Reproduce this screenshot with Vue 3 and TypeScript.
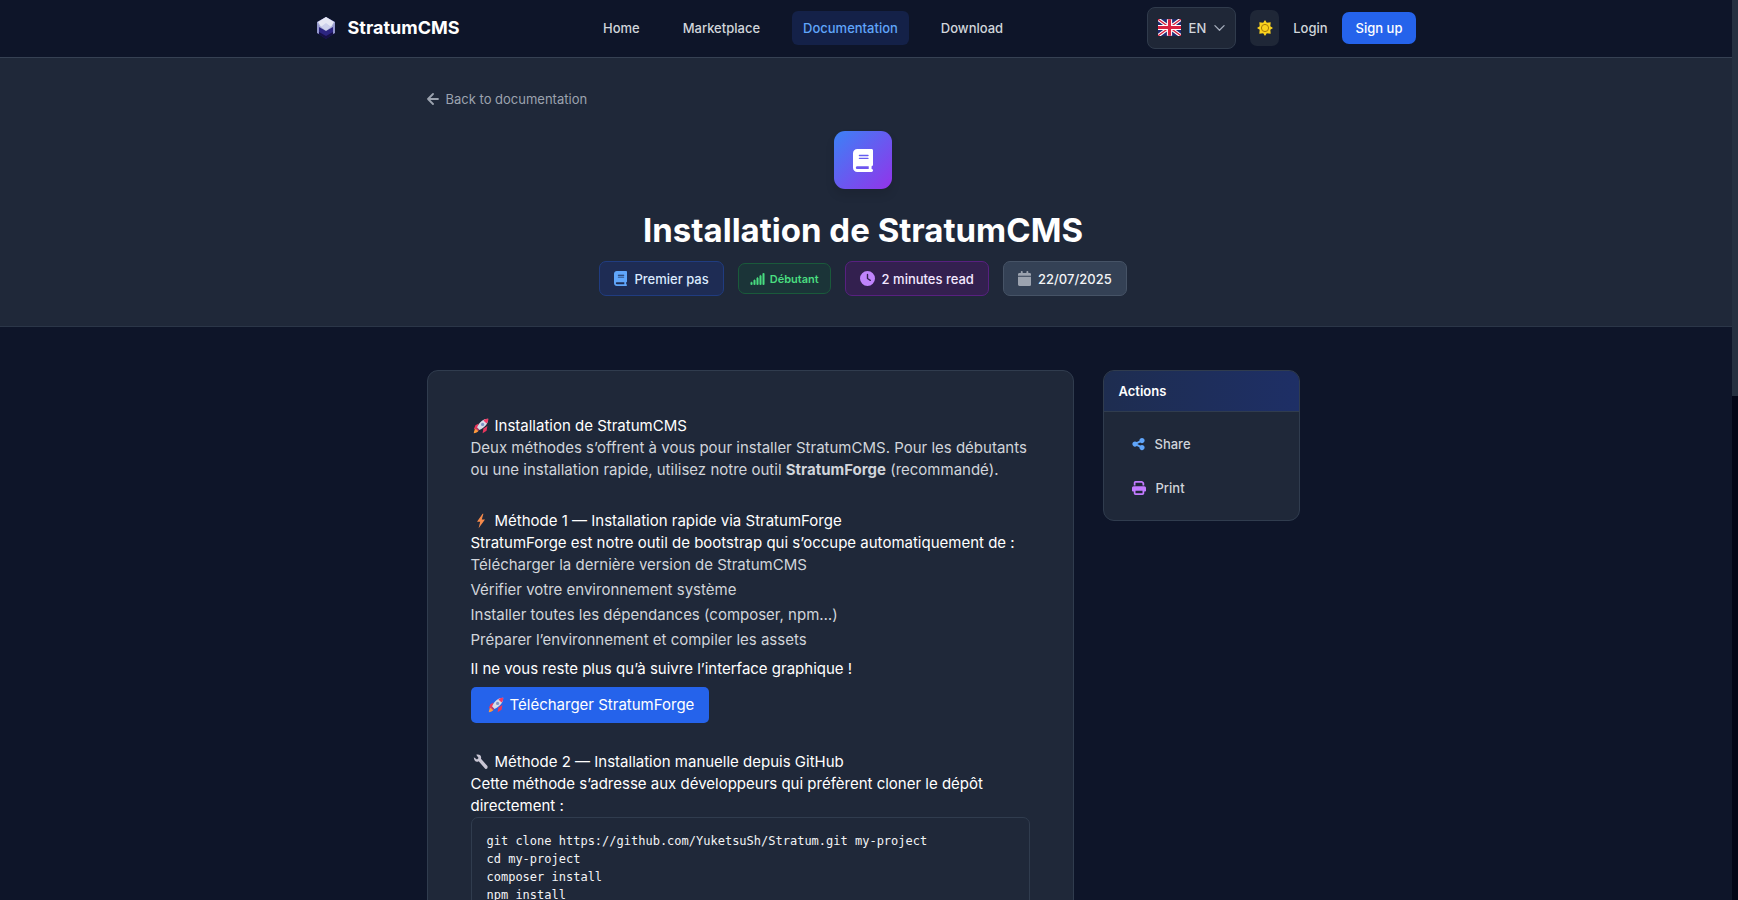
<script setup lang="ts">
interface NavItem { label: string; active?: boolean }
interface Badge { label: string; kind: string; box: string; path: string }

const nav: NavItem[] = [
  { label: 'Home' },
  { label: 'Marketplace' },
  { label: 'Documentation', active: true },
  { label: 'Download' },
]

const book = 'M96 0C43 0 0 43 0 96V416c0 53 43 96 96 96H384h32c17.7 0 32-14.3 32-32s-14.3-32-32-32V384c17.7 0 32-14.3 32-32V32c0-17.7-14.3-32-32-32H384 96zm0 384H352v64H96c-17.7 0-32-14.3-32-32s14.3-32 32-32zm32-240c0-8.8 7.2-16 16-16H336c8.8 0 16 7.2 16 16s-7.2 16-16 16H144c-8.8 0-16-7.2-16-16zm16 48H336c8.8 0 16 7.2 16 16s-7.2 16-16 16H144c-8.8 0-16-7.2-16-16s7.2-16 16-16z'

const badges: Badge[] = [
  { label: 'Premier pas', kind: 'blue', box: '0 0 448 512', path: book },
  { label: 'Débutant', kind: 'green', box: '0 0 640 512', path: 'M576 0c17.7 0 32 14.3 32 32V480c0 17.7-14.3 32-32 32s-32-14.3-32-32V32c0-17.7 14.3-32 32-32zM448 96c17.7 0 32 14.3 32 32V480c0 17.7-14.3 32-32 32s-32-14.3-32-32V128c0-17.7 14.3-32 32-32zM352 224V480c0 17.7-14.3 32-32 32s-32-14.3-32-32V224c0-17.7 14.3-32 32-32s32 14.3 32 32zM192 288c17.7 0 32 14.3 32 32V480c0 17.7-14.3 32-32 32s-32-14.3-32-32V320c0-17.7 14.3-32 32-32zM96 416v64c0 17.7-14.3 32-32 32s-32-14.3-32-32V416c0-17.7 14.3-32 32-32s32 14.3 32 32z' },
  { label: '2 minutes read', kind: 'purple', box: '0 0 512 512', path: 'M256 0a256 256 0 1 1 0 512A256 256 0 1 1 256 0zM232 120V256c0 8 4 15.5 10.7 20l96 64c11 7.4 25.9 4.4 33.3-6.7s4.4-25.9-6.7-33.3L280 243.2V120c0-13.3-10.7-24-24-24s-24 10.7-24 24z' },
  { label: '22/07/2025', kind: 'gray', box: '0 0 448 512', path: 'M96 32V64H48C21.5 64 0 85.5 0 112v48H448V112c0-26.5-21.5-48-48-48H352V32c0-17.7-14.3-32-32-32s-32 14.3-32 32V64H160V32c0-17.7-14.3-32-32-32S96 14.3 96 32zM448 192H0V464c0 26.5 21.5 48 48 48H400c26.5 0 48-21.5 48-48V192z' },
]

const steps: string[] = [
  'Télécharger la dernière version de StratumCMS',
  'Vérifier votre environnement système',
  'Installer toutes les dépendances (composer, npm…)',
  'Préparer l’environnement et compiler les assets',
]

const commands = `git clone https://github.com/YuketsuSh/Stratum.git my-project
cd my-project
composer install
npm install`
</script>

<template>
  <div class="shell">
    <svg class="defs" aria-hidden="true">
      <symbol id="rocket" viewBox="0 0 20 20">
        <path d="M7 7 3 9 1 14l5-1zM13 13l-1 6 5-3 1-6z" fill="#e8365d" />
        <path d="M4 13c-2 1-3 4-3 6 2 0 5-1 6-3z" fill="#ff9a3c" />
        <path d="M19 1c-6 0-11 4-14 11l3 3c7-3 11-8 11-14z" fill="#d8dce8" />
        <path d="M19 1c-2 0-4 0-6 2l4 4c2-2 2-4 2-6z" fill="#f23b66" />
        <path d="m5 12 3 3-2 1-2-2z" fill="#c23a68" />
        <circle cx="12" cy="8" r="2" fill="#7e95c5" />
      </symbol>
    </svg>
    <div class="page">
      <header class="topbar">
        <div class="topbar-inner">
          <a class="brand" href="#">
            <svg class="logo" viewBox="0 0 20 24" aria-hidden="true">
              <path d="m10 1 9 5v11l-9 6-9-6V6z" fill="#231d6b" />
              <path d="m10 1 9 5v5l-9 5-9-5V6z" fill="#a3a8d2" />
              <path d="m10 1 8 5-3 5-5-3-5 3-3-5z" fill="#e6e8f4" />
              <path d="m10 7 5 4-5 4-5-4z" fill="#cdd1ec" />
              <path d="m3 11 7 4 7-4v6l-7 5-7-5z" fill="#2c2580" />
              <path d="m3 16 7 4 7-4v2l-7 5-7-5z" fill="#171145" />
              <path d="M1 6v11l2 1V10zM19 6v11l-2 1V10z" fill="#9497cc" />
            </svg>
            <span>StratumCMS</span>
          </a>
          <nav class="nav" aria-label="Main">
            <a v-for="n in nav" :key="n.label" href="#" :class="{ active: n.active }">{{ n.label }}</a>
          </nav>
          <div class="tools">
            <button class="lang" type="button">
              <svg class="flag" viewBox="0 0 22 16" aria-hidden="true">
                <path fill="#1f2a72" d="M0 0h22v16H0z" />
                <path d="m0 0 22 16M22 0 0 16" stroke="#fff" stroke-width="3.4" />
                <path d="m0 0 22 16M22 0 0 16" stroke="#d8203f" stroke-width="1.2" />
                <path d="M11 0v16M0 8h22" stroke="#fff" stroke-width="5" />
                <path d="M11 0v16M0 8h22" stroke="#d8203f" stroke-width="3" />
              </svg>
              <span>EN</span>
              <svg class="chev" viewBox="0 0 12 12" aria-hidden="true"><path d="m1 4 5 5 5-5" fill="none" stroke="#a5adbb" stroke-width="1.4" stroke-linecap="round" stroke-linejoin="round" /></svg>
            </button>
            <button class="theme" type="button" aria-label="Toggle theme">
              <svg viewBox="0 0 16 16" aria-hidden="true">
                <path d="m8 0 1.8 2.7L13.7 2.300 13.300 6.200 16 8l-2.700 1.800.4 3.900-3.900-.4L8 16l-1.800-2.700-3.900.4.4-3.900L0 8l2.700-1.800-.4-3.900 3.900.4z" fill="#fad21e" />
                <circle cx="8" cy="8" r="3.600" fill="#fad21e" stroke="#a87b08" stroke-width="1" />
              </svg>
            </button>
            <a class="login" href="#">Login</a>
            <a class="signup" href="#">Sign up</a>
          </div>
        </div>
      </header>

      <section class="hero">
        <div class="container">
          <a class="back" href="#">
            <svg viewBox="0 0 12 12" aria-hidden="true"><path d="M6 1 1 6l5 5M1 6h10" fill="none" stroke="currentColor" stroke-width="1.8" stroke-linecap="round" stroke-linejoin="round" /></svg>
            <span>Back to documentation</span>
          </a>
          <div class="hero-body">
            <div class="hero-icon">
              <svg viewBox="0 0 448 512" aria-hidden="true"><path :d="book" fill="#fff" /></svg>
            </div>
            <h1>Installation de StratumCMS</h1>
            <div class="badges">
              <span v-for="b in badges" :key="b.label" class="badge" :class="b.kind">
                <svg :viewBox="b.box" aria-hidden="true"><path :d="b.path" fill="currentColor" fill-rule="evenodd" /></svg>
                <span>{{ b.label }}</span>
              </span>
            </div>
          </div>
        </div>
      </section>

      <main class="container layout">
        <article class="card doc">
          <h2><svg class="emoji" aria-hidden="true"><use href="#rocket" /></svg>Installation de StratumCMS</h2>
          <p>Deux méthodes s’offrent à vous pour installer StratumCMS. Pour les débutants ou une installation rapide, utilisez notre outil <strong>StratumForge</strong> (recommandé).</p>

          <h2 class="spaced">
            <svg class="emoji" viewBox="0 0 20 20" aria-hidden="true"><path d="M12 1 5 11h4l-2 8 8-11h-4l2-7z" fill="#f58a4b" /></svg>Méthode 1 — Installation rapide via StratumForge
          </h2>
          <p class="bright">StratumForge est notre outil de bootstrap qui s’occupe automatiquement de :</p>
          <ul>
            <li v-for="s in steps" :key="s">{{ s }}</li>
          </ul>
          <p class="bright">Il ne vous reste plus qu’à suivre l’interface graphique !</p>
          <a class="download" href="#"><svg class="emoji" aria-hidden="true"><use href="#rocket" /></svg>Télécharger StratumForge</a>

          <h2 class="method">
            <svg class="emoji" viewBox="0 0 20 20" aria-hidden="true"><path d="M1 4 5 7 7 5 4 1c4-1 7 1 6 5l8 9c1 2-1 5-3 3L7 9C4 11 1 8 1 4z" fill="#c9c6d4" /></svg>Méthode 2 — Installation manuelle depuis GitHub
          </h2>
          <p class="bright">Cette méthode s’adresse aux développeurs qui préfèrent cloner le dépôt directement :</p>
          <pre><code>{{ commands }}</code></pre>
        </article>

        <aside class="card actions">
          <h3>Actions</h3>
          <div class="action-list">
            <button type="button">
              <svg class="share" viewBox="0 0 448 512" aria-hidden="true"><path fill="#60a5fa" d="M352 224c53 0 96-43 96-96s-43-96-96-96s-96 43-96 96c0 4 .2 8 .7 11.9l-94.1 47C145.4 170.2 121.9 160 96 160c-53 0-96 43-96 96s43 96 96 96c25.9 0 49.4-10.2 66.6-26.9l94.1 47c-.5 3.9-.7 7.8-.7 11.9c0 53 43 96 96 96s96-43 96-96s-43-96-96-96c-25.9 0-49.4 10.2-66.6 26.9l-94.1-47c.5-3.9 .7-7.8 .7-11.9s-.2-8-.7-11.9l94.1-47C302.6 213.8 326.1 224 352 224z" /></svg>
              <span>Share</span>
            </button>
            <button type="button">
              <svg class="print" viewBox="0 0 512 512" aria-hidden="true"><path fill="#c27aff" d="M128 0C92.7 0 64 28.7 64 64v96h64V64H354.7L384 93.3V160h64V93.3c0-17-6.7-33.3-18.7-45.3L400 18.7C388 6.7 371.7 0 354.7 0H128zM384 352v32 64H128V384 368 352H384zm64 32h32c17.7 0 32-14.3 32-32V256c0-35.3-28.7-64-64-64H64c-35.3 0-64 28.7-64 64v96c0 17.7 14.3 32 32 32H64v64c0 35.3 28.7 64 64 64H384c35.3 0 64-28.7 64-64V384z" /></svg>
              <span>Print</span>
            </button>
          </div>
        </aside>
      </main>
    </div>
    <div class="scrollbar" aria-hidden="true"><div class="thumb"></div></div>
  </div>
</template>

<style>
body { background: #0e1529; }
</style>

<style scoped>
* { box-sizing: border-box; }
.shell {
  display: flex;
  height: 100vh;
  overflow: hidden;
  background: #0e1529;
  color: #d1d5db;
  font: 14px/22px Inter, "Liberation Sans", sans-serif;
}
.defs { position: absolute; width: 0; height: 0; }
.page { flex: 1; min-width: 0; overflow-y: auto; scrollbar-width: none; }
a { color: inherit; text-decoration: none; }
button { font: inherit; color: inherit; cursor: pointer; }
h1, h2, h3, p, ul, pre { margin: 0; padding: 0; }
svg { display: block; flex: none; }

.topbar { border-bottom: 1px solid #364153; }
.topbar-inner {
  display: flex;
  align-items: center;
  justify-content: space-between;
  height: 57px;
  max-width: 1101px;
  margin: 0 auto;
  padding-bottom: 2px;
  font-size: 13px;
  font-weight: 500;
}
.brand { display: flex; align-items: center; gap: 12px; color: #fff; font-size: 18px; font-weight: 700; }
.logo { width: 20px; height: 24px; }
.nav { display: flex; gap: 21px; }
.nav a { padding: 6px 11px; border-radius: 6px; }
.nav .active { background: #142148; color: #60a5fa; }
.tools { display: flex; align-items: center; gap: 14px; }
.lang {
  display: flex;
  align-items: center;
  gap: 8px;
  height: 42px;
  padding: 0 10px;
  background: #1f2737;
  border: 1px solid #303b4c;
  border-radius: 8px;
}
.flag { width: 23px; height: 17px; }
.chev { width: 11px; height: 11px; }
.theme { width: 29px; height: 36px; padding: 0; display: grid; place-items: center; background: #1f2737; border: 0; border-radius: 7px; }
.theme svg { width: 16px; height: 16px; }
.signup { padding: 5px 14px; border-radius: 7px; background: #2563eb; color: #fff; }

.hero { background: #1f2839; border-bottom: 1px solid #2b3648; }
.container { max-width: 879px; margin: 0 auto; }
.hero .container { padding: 30px 6px 30px 0; }
.back { display: inline-flex; align-items: center; gap: 7px; color: #9ca3af; font-size: 13px; }
.back svg { width: 12px; height: 12px; }
.hero-body { display: flex; flex-direction: column; align-items: center; margin-top: 20px; }
.hero-icon {
  display: grid;
  place-items: center;
  width: 58px;
  height: 58px;
  border-radius: 11px;
  background: linear-gradient(135deg, #3b82f6, #9333ea);
  box-shadow: 0 6px 10px rgba(0, 0, 0, .1);
}
.hero-icon svg { width: 20px; height: 23px; }
h1 { margin-top: 22px; color: #fff; font-size: 33px; line-height: 38px; font-weight: 700; }
.badges { display: flex; align-items: center; gap: 14px; margin-top: 12px; }
.badge {
  display: flex;
  align-items: center;
  gap: 7px;
  height: 35px;
  padding: 0 14px;
  border: 1px solid;
  border-radius: 7px;
  font-size: 13px;
  font-weight: 500;
  white-space: nowrap;
}
.badge svg { height: 15px; }
.blue { background: #1e2c54; border-color: #203c80; color: #60a5fa; }
.blue span { color: #dbeafe; }
.green { height: 31px; padding: 0 11px; gap: 5px; background: #1b3438; border-color: #1a5a3b; color: #4ade80; font-size: 11px; font-weight: 600; }
.green svg { height: 12px; }
.green path { stroke: currentColor; stroke-width: 20; }
.purple { background: #33204f; border-color: #582080; color: #c084fc; }
.purple span { color: #f3e8ff; }
.gray { background: #344155; border-color: #465366; color: #9ca3af; }
.gray span { color: #f3f4f6; }

.layout { display: grid; grid-template-columns: minmax(0, 647px) 197px; justify-content: space-between; align-items: start; padding: 43px 6px 43px 0; }
.card { background: #1f2839; border: 1px solid #303c4e; border-radius: 11px; }
.doc { padding: 44px 43px; font-size: 15px; }
h2 { display: flex; align-items: center; color: #fff; font-size: 15px; line-height: 22px; font-weight: 400; }
.emoji { width: 16px; height: 16px; margin: 0 6px 0 2px; }
.spaced { margin-top: 29px; }
.bright { color: #fff; }
ul { list-style: none; }
li { margin-bottom: 3px; }
li:last-child { margin-bottom: 7px; }
.download { display: inline-flex; align-items: center; height: 36px; margin-top: 7px; padding: 0 15px; border-radius: 5px; background: #2563eb; color: #fff; }
.method { margin-top: 28px; }
pre { padding: 14px 15px; border: 1px solid #303c4e; border-radius: 7px; color: #f3f4f6; font-size: 12px; line-height: 18px; }
code { font-family: "DejaVu Sans Mono", monospace; font-size: 12px; }

.actions { overflow: hidden; }
h3 { padding: 9px 15px; border-bottom: 1px solid #303c4e; background: linear-gradient(90deg, #1e2d50, #1e2f66); color: #fff; font-size: 13px; font-weight: 600; }
.action-list { display: flex; flex-direction: column; gap: 8px; padding: 14px 15px; }
.action-list button { display: flex; align-items: center; gap: 10px; height: 36px; padding: 0 13px; border: 0; background: none; font-size: 13px; font-weight: 500; }
.share { width: 13px; height: 14px; }
.print { width: 14px; height: 14px; }

.scrollbar { width: 6px; flex: none; background: #020617; }
.thumb { height: 44%; background: #253040; }
</style>
